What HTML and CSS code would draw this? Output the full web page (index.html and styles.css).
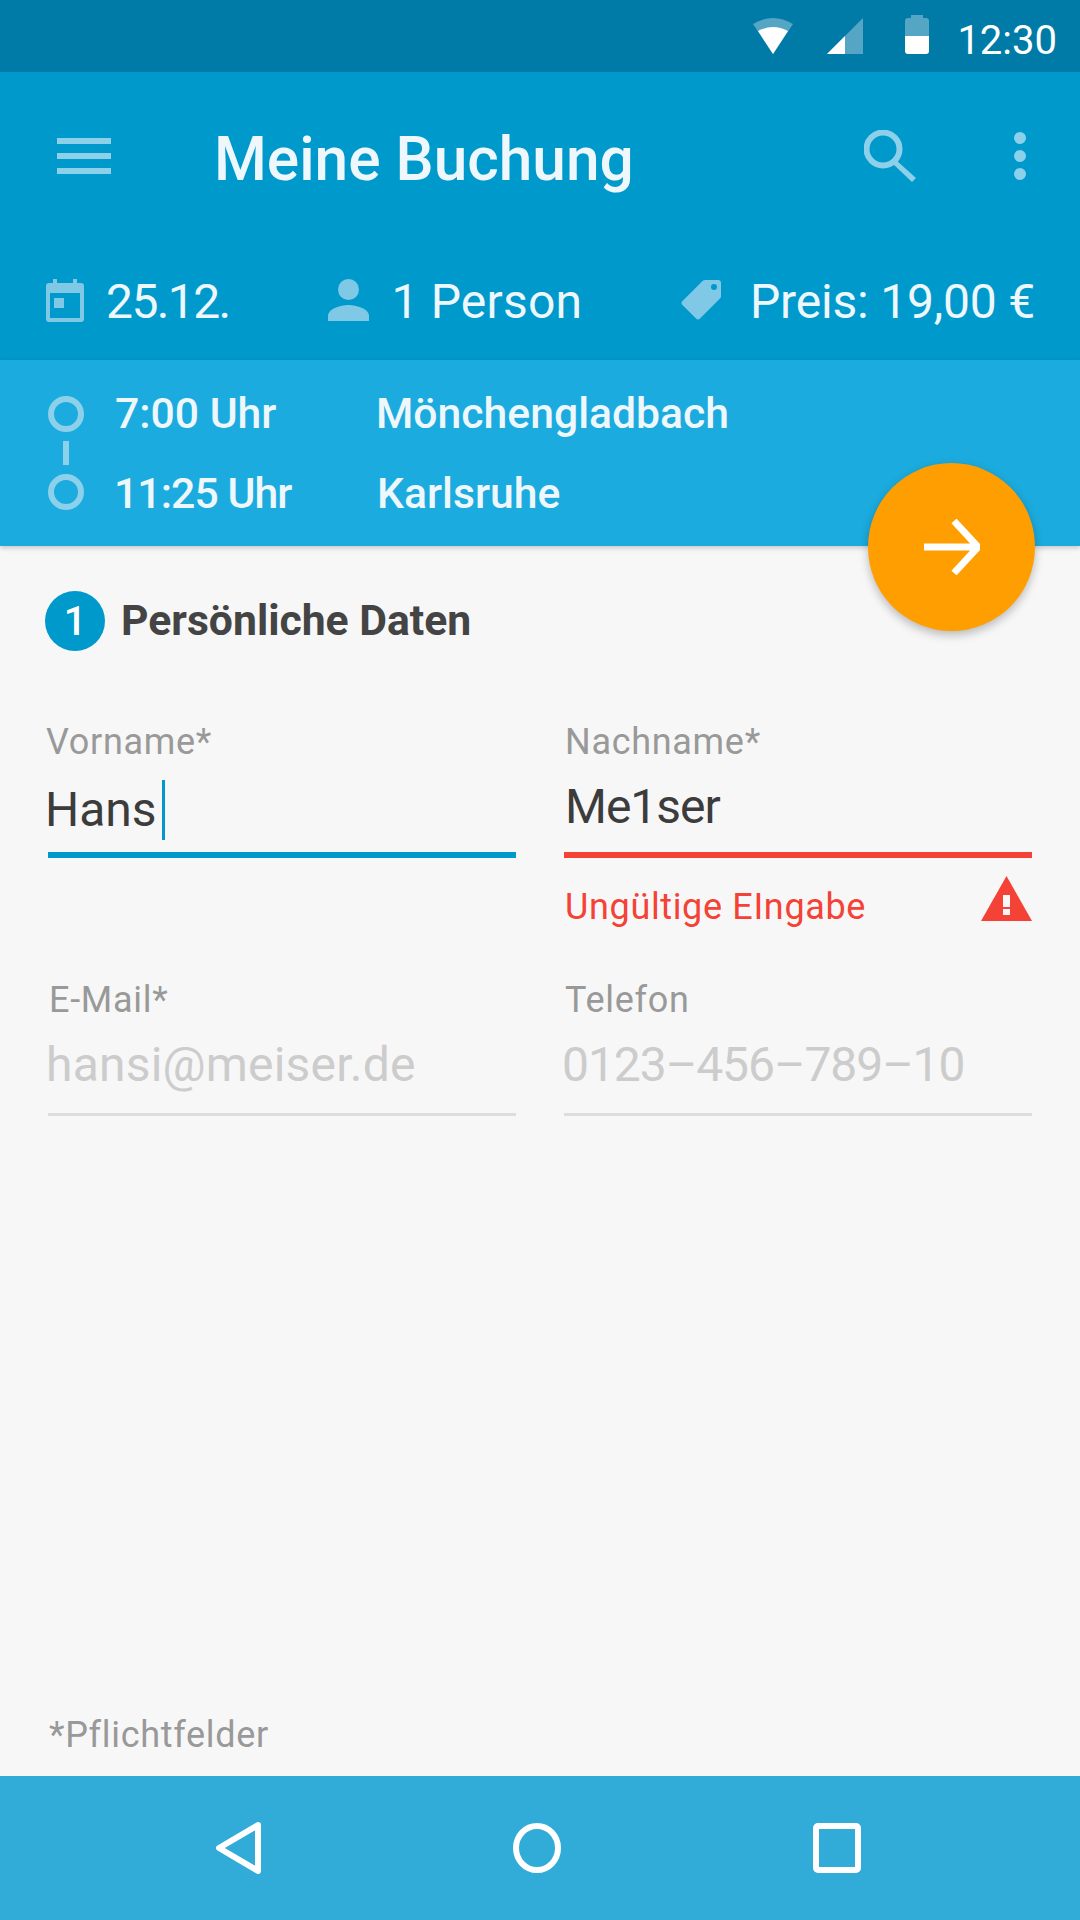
FILE: index.html
```html
<!DOCTYPE html>
<html lang="de">
<head>
  <meta charset="UTF-8">
  <meta name="viewport" content="width=device-width, initial-scale=1.0">
  <title>Meine Buchung</title>
  <link rel="stylesheet" href="styles.css">
</head>
<body>
  <!-- Status bar -->
  <div class="status-bar">
    <svg class="status-wifi" width="40" height="40" viewBox="0 0 40 40">
      <path class="dim" d="M20 39L0 9Q20 -3 40 9Z"/>
      <path d="M20 39L5 16Q20 8 35 16Z"/>
    </svg>
    <svg class="status-signal" width="36" height="40" viewBox="0 0 36 40">
      <path class="dim" d="M0 39L36 3V39Z"/>
      <path d="M0 39L18 21V39Z"/>
    </svg>
    <svg class="status-battery" width="24" height="40" viewBox="0 0 24 40">
      <path class="dim" d="M6 0H18V3H21A3 3 0 0 1 24 6V21H0V6A3 3 0 0 1 3 3H6Z"/>
      <path d="M0 21H24V36A3 3 0 0 1 21 39H3A3 3 0 0 1 0 36Z"/>
    </svg>
    <span class="status-time">12:30</span>
  </div>

  <header class="app-header">
    <div class="toolbar">
      <svg class="icon-menu" width="54" height="36" viewBox="0 0 54 36">
        <path d="M0 0H54V6H0ZM0 15H54V21H0ZM0 30H54V36H0Z"/>
      </svg>
      <h1>Meine Buchung</h1>
      <svg class="icon-search" width="52" height="52" viewBox="0 0 52 52">
        <circle cx="19" cy="19" r="16.5" fill="none" stroke-width="6"/>
        <path d="M32 30L52 48L48 52L29 34Z" class="search-handle"/>
      </svg>
      <svg class="icon-more" width="12" height="48" viewBox="0 0 12 48">
        <circle cx="6" cy="6" r="6"/>
        <circle cx="6" cy="24" r="6"/>
        <circle cx="6" cy="42" r="6"/>
      </svg>
    </div>

    <div class="info-row">
      <div class="info-item info-date">
        <svg width="38" height="43" viewBox="0 0 38 43">
          <path fill-rule="evenodd" d="M7 0H11V4H27V0H31V4H35A3 3 0 0 1 38 7V40A3 3 0 0 1 35 43H3A3 3 0 0 1 0 40V7A3 3 0 0 1 3 4H7ZM4 14V39H34V14ZM8 19H18V29H8Z"/>
        </svg>
        <span>25.12.</span>
      </div>
      <div class="info-item info-person">
        <svg width="41" height="42" viewBox="0 0 41 42">
          <circle cx="20.5" cy="10.5" r="10.5"/>
          <path d="M0 42V37C0 30 12 26 20.5 26C29 26 41 30 41 37V42Z"/>
        </svg>
        <span>1 Person</span>
      </div>
      <div class="info-item info-price">
        <svg width="40" height="40" viewBox="0 0 40 40">
          <path fill-rule="evenodd" d="M21 1.500Q22 0 24 0H37A3 3 0 0 1 40 3V16Q40 18 38.500 19L19 38.500Q17 40.500 15 38.500L1.500 25Q-.5 23 1.500 21ZM33 4A3 3 0 1 0 33 10A3 3 0 1 0 33 4Z"/>
        </svg>
        <span>Preis: 19,00 €</span>
      </div>
    </div>
  </header>

  <section class="route">
    <div class="route-line">
      <span class="route-stop"></span>
      <span class="route-link"></span>
      <span class="route-stop"></span>
    </div>
    <div class="route-rows">
      <div class="route-row"><span class="route-time">7:00 Uhr</span><span>Mönchengladbach</span></div>
      <div class="route-row"><span class="route-time route-time-tight">11:25 Uhr</span><span>Karlsruhe</span></div>
    </div>
    <button class="fab">
      <svg width="56" height="56" viewBox="0 0 56 56">
        <path d="M0 28H52M30 2L54 28L30 54" fill="none" stroke="#fff" stroke-width="7"/>
      </svg>
    </button>
  </section>

  <main class="content">
    <div class="step">
      <span class="step-number">1</span>
      <h2>Persönliche Daten</h2>
    </div>

    <div class="form-grid">
      <div class="field">
        <label class="label-first">Vorname*</label>
        <div class="value value-hans">Hans<span class="caret"></span></div>
        <div class="underline underline-focus"></div>
      </div>
      <div class="field">
        <label>Nachname*</label>
        <div class="value value-error">Me1ser</div>
        <div class="underline underline-error"></div>
        <div class="error-row">
          <span class="error-text">Ungültige EIngabe</span>
          <svg width="51" height="45" viewBox="0 0 51 45">
            <path fill="#f44336" d="M25.500 0L51 45H0Z"/>
            <path fill="#f7f7f7" d="M22 19H29V31H22ZM22 33H29V39H22Z"/>
          </svg>
        </div>
      </div>
      <div class="field">
        <label class="label-mail">E-Mail*</label>
        <div class="value value-empty value-mail">hansi@meiser.de</div>
        <div class="underline"></div>
      </div>
      <div class="field">
        <label>Telefon</label>
        <div class="value value-empty value-phone">0123–456–789–10</div>
        <div class="underline"></div>
      </div>
    </div>

    <p class="footnote">*Pflichtfelder</p>
  </main>

  <nav class="nav-bar">
    <svg width="48" height="52" viewBox="0 0 48 52">
      <path d="M44 3L5 26L44 49Z" fill="none" stroke="#fff" stroke-width="6" stroke-linejoin="round"/>
    </svg>
    <svg width="48" height="50" viewBox="0 0 48 50">
      <ellipse cx="24" cy="25" rx="21" ry="22" fill="none" stroke="#fff" stroke-width="6"/>
    </svg>
    <svg class="nav-recent" width="48" height="50" viewBox="0 0 48 50">
      <rect x="3" y="3" width="42" height="44" rx="2" fill="none" stroke="#fff" stroke-width="6"/>
    </svg>
  </nav>
</body>
</html>
```

FILE: styles.css
```css
:root {
  --primary-color: #0099cc;
  --route-color: #1cabde;
  --icon-color: #8cd0ea;
  --head-text: #eef7fc;
  --error-color: #f44336;
  --label-color: #999;
}

* {
  box-sizing: border-box;
  margin: 0;
  padding: 0;
}

body {
  font-family: Roboto, sans-serif;
  width: 1080px;
  height: 1920px;
  display: flex;
  flex-direction: column;
  background-color: #f7f7f7;
  overflow: hidden;
}

.status-bar {
  height: 72px;
  flex-shrink: 0;
  display: flex;
  justify-content: flex-end;
  align-items: flex-start;
  padding: 15px 23px 0 0;
  background-color: #007ba7;
  color: #fff;
}

.status-bar svg {
  fill: #fff;
}

.status-bar .dim {
  opacity: 0.33;
}

.status-signal {
  margin-left: 34px;
}

.status-battery {
  margin-left: 42px;
}

.status-time {
  margin: 2px 0 0 28px;
  font-size: 40px;
  line-height: 48px;
}

.app-header {
  flex-shrink: 0;
  background-color: var(--primary-color);
  color: var(--head-text);
}

.toolbar {
  height: 168px;
  display: flex;
  align-items: center;
  padding: 0 54px 0 57px;
}

.toolbar svg {
  fill: var(--icon-color);
}

h1 {
  flex: 1;
  margin: 7px 0 0 103px;
  font-size: 60.4px;
  line-height: 72px;
  font-weight: 500;
}

.icon-search circle {
  stroke: var(--icon-color);
}

.icon-more {
  margin-left: 98px;
}

.info-row {
  height: 120px;
  display: flex;
  justify-content: space-between;
  align-items: flex-start;
  padding: 34px 45px 0 46px;
}

.info-item {
  display: flex;
  align-items: center;
  gap: 24px;
  font-size: 48px;
  line-height: 56px;
  font-weight: 400;
}

.info-date {
  gap: 22px;
  letter-spacing: -1.6px;
}

.info-person {
  gap: 22px;
  letter-spacing: 0.2px;
}

.info-price {
  gap: 29px;
  letter-spacing: -0.2px;
}

.info-item svg {
  margin-bottom: 4px;
  fill: #7fc8e6;
}

.route {
  position: relative;
  z-index: 2;
  height: 186px;
  flex-shrink: 0;
  display: flex;
  padding: 13px 0 0 48px;
  background-color: var(--route-color);
  color: var(--head-text);
  box-shadow: 0 2px 5px rgba(0,0,0,0.2);
}

.route-line {
  display: flex;
  flex-direction: column;
  align-items: center;
  gap: 9px;
  width: 36px;
  margin-top: 23px;
}

.route-stop {
  width: 36px;
  height: 36px;
  border: 6px solid var(--icon-color);
  border-radius: 50%;
}

.route-link {
  width: 6px;
  height: 24px;
  background-color: var(--icon-color);
}

.route-rows {
  margin-left: 31px;
}

.route-row {
  display: flex;
  font-size: 42.7px;
  line-height: 80px;
  font-weight: 500;
}

.route-time {
  width: 261px;
}

.route-time-tight {
  width: 263px;
  margin-left: -1px;
  letter-spacing: -0.9px;
}

.fab {
  position: absolute;
  right: 45px;
  bottom: -85px;
  width: 167px;
  height: 168px;
  display: flex;
  align-items: center;
  justify-content: center;
  border: none;
  border-radius: 50%;
  background-color: #ff9e00;
  box-shadow: 0 4px 10px rgba(0,0,0,0.25);
}

.content {
  flex: 1;
  display: flex;
  flex-direction: column;
  padding: 45px 48px 0;
}

.step {
  display: flex;
  align-items: center;
  gap: 16px;
  margin-left: -3px;
}

.step-number {
  width: 60px;
  height: 60px;
  display: flex;
  align-items: center;
  justify-content: center;
  border-radius: 50%;
  background-color: var(--primary-color);
  color: #fff;
  font-size: 40px;
  font-weight: 500;
}

h2 {
  margin-bottom: 2px;
  font-size: 42.7px;
  line-height: 58px;
  font-weight: 700;
  color: #444;
}

.form-grid {
  display: grid;
  grid-template-columns: 468px 468px;
  column-gap: 48px;
  margin-top: 69px;
}

label {
  display: block;
  margin-left: 1px;
  font-size: 36px;
  line-height: 44px;
  letter-spacing: 0.7px;
  color: var(--label-color);
}

.label-first {
  margin-left: -2px;
}

.value {
  display: flex;
  font-size: 48px;
  line-height: 60px;
  color: #3c3c3c;
}

.value-hans {
  height: 88px;
  padding-top: 16px;
  margin-left: -3px;
}

.value-error {
  height: 88px;
  padding: 13px 0 0 1px;
  letter-spacing: -1px;
}

.value-empty {
  height: 91px;
  padding-top: 13px;
  color: #ccc;
}

.value-mail {
  margin-left: -2px;
  letter-spacing: 0.2px;
}

.value-phone {
  margin-left: -2px;
  letter-spacing: -1.05px;
}

.caret {
  width: 3px;
  height: 60px;
  margin-left: 5px;
  background-color: var(--primary-color);
}

.underline {
  height: 3px;
  background-color: #ddd;
}

.underline-focus {
  height: 6px;
  background-color: var(--primary-color);
}

.underline-error {
  height: 6px;
  background-color: var(--error-color);
}

.error-row {
  height: 120px;
  display: flex;
  justify-content: space-between;
  align-items: flex-start;
  padding-top: 18px;
}

.error-text {
  margin: 9px 0 0 1px;
  font-size: 36px;
  line-height: 44px;
  letter-spacing: 0.65px;
  color: var(--error-color);
}

.footnote {
  margin: auto 0 19px 1px;
  font-size: 36px;
  line-height: 44px;
  letter-spacing: 0.7px;
  color: var(--label-color);
}

.nav-bar {
  height: 144px;
  flex-shrink: 0;
  display: flex;
  align-items: center;
  gap: 251px;
  padding-left: 214px;
  background-color: #31abd7;
}

.nav-recent {
  margin-left: 1px;
}
```
